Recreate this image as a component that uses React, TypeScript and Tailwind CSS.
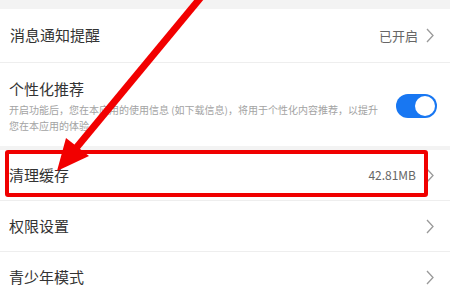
import React from "react";

const font = { fontFamily: '"Noto Sans CJK SC", "Noto Sans", sans-serif' };

function Chevron() {
  return (
    <svg width="8" height="15" viewBox="0 0 8 15" className="shrink-0">
      <polyline points="1,1 7,7.5 1,14" fill="none" stroke="#9a9a9a" strokeWidth="1.3" />
    </svg>
  );
}

export default function App() {
  return (
    <div className="relative w-[450px] h-[296px] overflow-hidden bg-white" style={font}>
      <div className="h-[9px] bg-[#f3f3f3]" />
      <div className="h-[53px] flex items-center justify-between pl-[10px] pr-[16px]">
        <span className="text-[15px] text-[#333]">消息通知提醒</span>
        <div className="flex items-center gap-[8px]">
          <span className="text-[13px] text-[#666]">已开启</span>
          <Chevron />
        </div>
      </div>
      <div className="h-px bg-[#eeeeee]" />
      <div className="h-[83px] flex items-center justify-between pl-[9px] pr-[13px] pt-[3px]">
        <div className="flex flex-col">
          <span className="text-[15px] leading-[20px] text-[#333]">个性化推荐</span>
          <span className="mt-[3px] text-[10px] leading-[16px] text-[#a3a3a3]">
            开启功能后，您在本应用的使用信息 (如下载信息)，将用于个性化内容推荐，以提升
            <br />
            您在本应用的体验
          </span>
        </div>
        <div className="w-[41px] h-[24px] rounded-full bg-[#1877f2] flex items-center justify-end pr-[2px]">
          <div className="w-[20px] h-[20px] rounded-full bg-white" />
        </div>
      </div>
      <div className="h-[4px] bg-[#f3f3f3]" />
      <div className="h-[50px] flex items-center justify-between pl-[9px] pr-[16px]">
        <span className="text-[15px] text-[#333]">清理缓存</span>
        <div className="flex items-center gap-[10px]">
          <span className="text-[12px] text-[#666]">42.81MB</span>
          <Chevron />
        </div>
      </div>
      <div className="h-px bg-[#eeeeee]" />
      <div className="h-[50px] flex items-center justify-between pl-[9px] pr-[16px]">
        <span className="text-[15px] text-[#333]">权限设置</span>
        <Chevron />
      </div>
      <div className="h-px bg-[#eeeeee]" />
      <div className="h-[50px] flex items-center justify-between pl-[9px] pr-[16px]">
        <span className="text-[15px] text-[#333]">青少年模式</span>
        <Chevron />
      </div>

      <div className="absolute left-[5px] top-[150px] w-[423px] h-[47px] border-[4px] border-[#f00000] rounded-[3px]" />

      <svg className="absolute left-0 top-0 pointer-events-none" width="450" height="296" viewBox="0 0 450 296">
        <line x1="202" y1="-4" x2="72" y2="153" stroke="#f20000" strokeWidth="7" />
        <polygon points="57,171 66,138 89,156" fill="#f20000" />
      </svg>
    </div>
  );
}
